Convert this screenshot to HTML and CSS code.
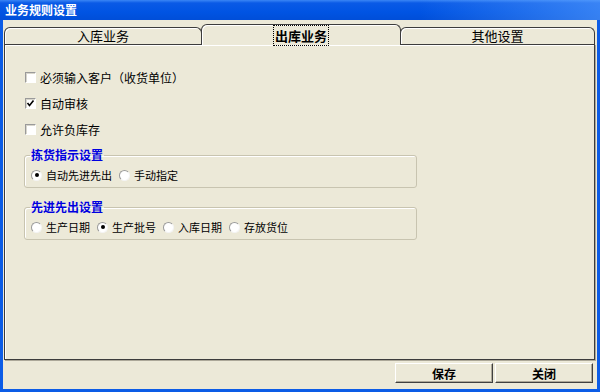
FILE: index.html
```html
<!DOCTYPE html>
<html lang="zh-CN">

<head>
    <meta charset="UTF-8">
    <title>业务规则设置</title>
    <link rel="stylesheet" href="styles.css">
</head>

<body>
    <div class="window">
        <div class="titlebar">业务规则设置</div>
        <div class="client">
            <div class="tabs">
                <div class="tab">入库业务</div>
                <div class="tab active"><span class="focus">出库业务</span></div>
                <div class="tab last">其他设置</div>
            </div>
            <div class="panel">
                <label class="check"><span class="box"></span>必须输入客户（收货单位）</label>
                <label class="check"><span class="box"><svg width="9" height="9" viewBox="0 0 9 9"><path d="M1.5 4 L3.5 6.5 L7.5 1.5" fill="none" stroke="#000" stroke-width="1.6"/></svg></span>自动审核</label>
                <label class="check"><span class="box"></span>允许负库存</label>

                <fieldset class="group">
                    <legend>拣货指示设置</legend>
                    <div class="radios">
                        <label class="radio"><span class="dot on"></span>自动先进先出</label>
                        <label class="radio"><span class="dot"></span>手动指定</label>
                    </div>
                </fieldset>

                <fieldset class="group second">
                    <legend>先进先出设置</legend>
                    <div class="radios">
                        <label class="radio"><span class="dot"></span>生产日期</label>
                        <label class="radio"><span class="dot on"></span>生产批号</label>
                        <label class="radio"><span class="dot"></span>入库日期</label>
                        <label class="radio"><span class="dot"></span>存放货位</label>
                    </div>
                </fieldset>
            </div>
            <div class="footer">
                <button>保存</button>
                <button>关闭</button>
            </div>
        </div>
    </div>
</body>

</html>
```

FILE: styles.css
```css
* {
    box-sizing: border-box;
    margin: 0;
    padding: 0;
}

body {
    width: 600px;
    height: 392px;
    overflow: hidden;
    background-color: #0c5ce6;
    font-family: "Noto Sans CJK SC", "Liberation Sans", sans-serif;
    font-size: 12px;
    color: #000;
}

.window {
    display: flex;
    flex-direction: column;
    height: 392px;
}

.titlebar {
    height: 20px;
    line-height: 19px;
    padding-left: 5px;
    color: #fff;
    font-weight: bold;
    font-size: 12px;
    background: linear-gradient(to right, rgba(90, 160, 255, 0) 70%, rgba(90, 160, 255, 0.6) 100%),
        linear-gradient(#3a86f5, #0a5ae6 3px, #0054e3 12px, #004ed8);
}

.client {
    flex: 1;
    display: flex;
    flex-direction: column;
    margin: 0 3px 3px 3px;
    padding: 0 2px 0 1px;
    background-color: #ece9d8;
}

/* tabs */
.tabs {
    display: flex;
    align-items: flex-end;
    height: 24px;
    position: relative;
    z-index: 1;
}

.tab {
    width: 198px;
    height: 17px;
    border: 1px solid #3c3c3c;
    border-bottom: none;
    border-radius: 6px 6px 0 0;
    box-shadow: inset 1px 1px 0 #fff;
    background-color: #ece9d8;
    text-align: center;
    font-size: 13px;
    line-height: 15px;
}

.tab+.tab {
    margin-left: -1px;
}

.tab.active {
    width: 200px;
    height: 21px;
    margin-bottom: -1px;
    padding-top: 3px;
    font-weight: bold;
}

.tab.last {
    flex: 1;
}

.focus {
    outline: 1px dotted #000;
    outline-offset: 0;
    padding: 0 1px;
}

.panel {
    flex: 1;
    border: 1px solid #3c3c3c;
    box-shadow: 1px 1px 0 #aca899, inset 1px 1px 0 #fff;
    padding: 19px 0 0 19px;
}

/* check boxes */
.check {
    display: flex;
    align-items: center;
    gap: 4px;
    height: 26px;
    margin-left: 1px;
}

.box {
    display: flex;
    align-items: center;
    justify-content: center;
    width: 11px;
    height: 11px;
    background-color: #fff;
    border: 1px solid;
    border-color: #9a9a9a #fff #fff #9a9a9a;
    box-shadow: inset 1px 1px 0 #d8d6cc;
}

/* group boxes */
.group {
    width: 393px;
    margin-top: 6px;
    padding: 5px 5px 4px;
    border: 1px solid #c8c4b0;
    border-radius: 3px;
    box-shadow: inset 1px 1px 0 #fff;
}

.group.second {
    margin-top: 12px;
}

legend {
    padding: 0 1px;
    line-height: 14px;
    font-weight: bold;
    font-size: 12px;
    color: #0000e0;
}

.radios {
    display: flex;
    align-items: center;
    gap: 7px;
    height: 16px;
    padding-left: 1px;
}

.radio {
    display: flex;
    align-items: center;
    gap: 4px;
    font-size: 11px;
}

.dot {
    display: flex;
    align-items: center;
    justify-content: center;
    width: 11px;
    height: 11px;
    border-radius: 50%;
    background-color: #fff;
    border: 1px solid;
    border-color: #9a9a9a #f4f4f4 #f4f4f4 #9a9a9a;
}

.dot.on::after {
    content: "";
    width: 4px;
    height: 4px;
    border-radius: 50%;
    background-color: #000;
}

/* buttons */
.footer {
    display: flex;
    justify-content: flex-end;
    align-items: flex-start;
    gap: 2px;
    height: 29px;
    padding: 3px 2px 0 0;
}

button {
    width: 98px;
    height: 20px;
    font-family: "Noto Sans CJK SC", sans-serif;
    font-size: 12px;
    font-weight: bold;
    background-color: #ece9d8;
    border: 1px solid;
    border-color: #fff #404040 #404040 #fff;
    box-shadow: inset -1px -1px 0 #aca899;
}
```
